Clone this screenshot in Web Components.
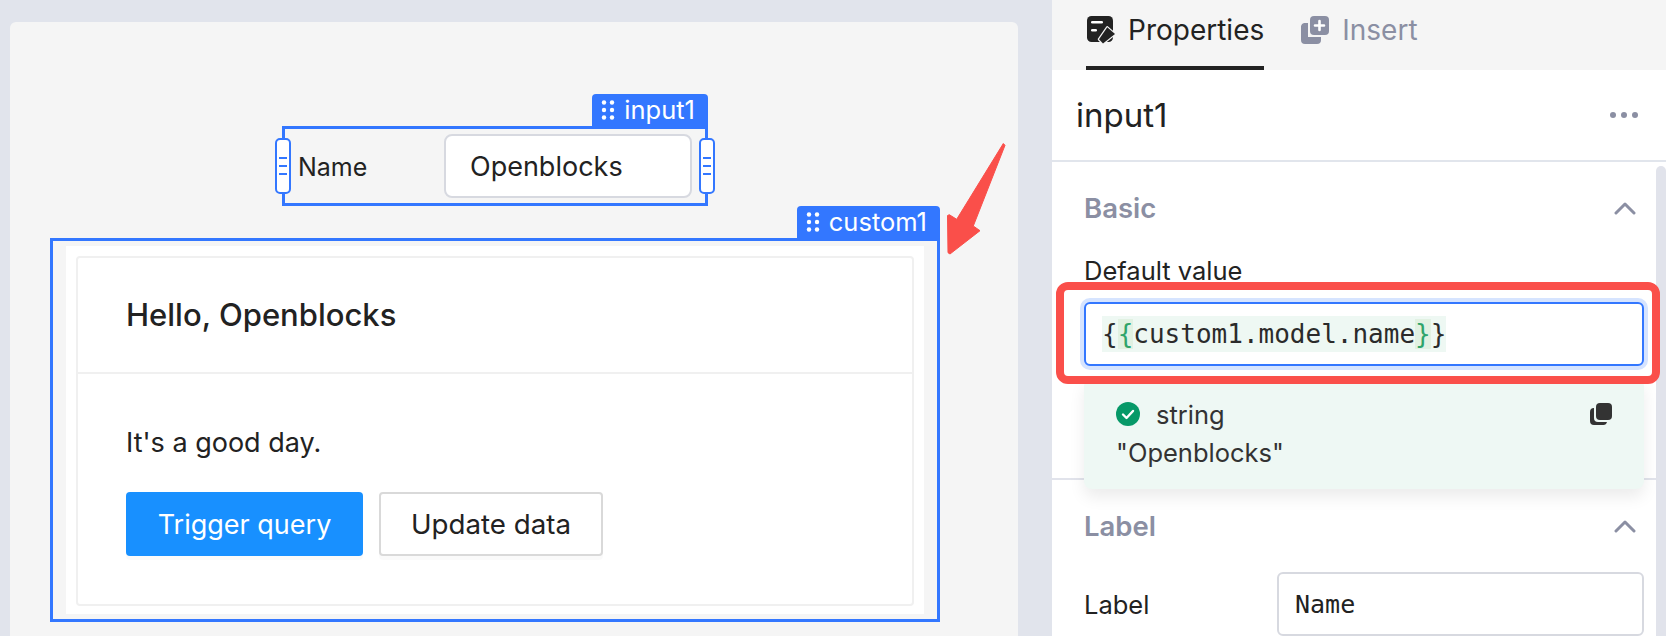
<!doctype html>
<html>
<head>
<meta charset="utf-8">
<title>input1</title>
<style>
  html, body { margin: 0; height: 100%; }
  body { background: #e1e4ec; font-family: Inter, "Liberation Sans", sans-serif; color: #222; overflow: hidden; }
</style>
</head>
<body>
<editor-shell>
  <editor-canvas slot="canvas">
    <selected-widget name="input1" resizable style="left:272px;top:104px;width:426px;height:80px">
      <input-widget label="Name" value="Openblocks"></input-widget>
    </selected-widget>
    <selected-widget name="custom1" style="left:40px;top:216px;width:890px;height:384px">
      <custom-card title="Hello, Openblocks" text="It's a good day."></custom-card>
    </selected-widget>
    <red-arrow></red-arrow>
  </editor-canvas>
  <property-panel slot="panel"></property-panel>
</editor-shell>

<script>
const BLUE = "#3377ff";

class EditorShell extends HTMLElement {
  constructor() {
    super();
    this.attachShadow({ mode: "open" });
    this.shadowRoot.innerHTML = `
      <style>
        :host { display: grid; grid-template-columns: 1008px 614px; column-gap: 34px; padding-left: 10px; height: 636px; box-sizing: border-box; }
        .left { padding-top: 22px; min-width: 0; }
      </style>
      <div class="left"><slot name="canvas"></slot></div>
      <slot name="panel"></slot>
    `;
  }
}

class EditorCanvas extends HTMLElement {
  constructor() {
    super();
    this.attachShadow({ mode: "open" });
    this.shadowRoot.innerHTML = `
      <style>
        :host { display: block; position: relative; height: 614px; background: #f5f5f5; border-radius: 6px 6px 0 0; }
      </style>
      <slot></slot>
    `;
  }
}

// selection frame around a widget on the canvas, with the name tab on top
class SelectedWidget extends HTMLElement {
  constructor() {
    super();
    this.attachShadow({ mode: "open" });
    this.shadowRoot.innerHTML = `
      <style>
        :host { display: block; position: absolute; box-sizing: border-box; border: 3px solid ${BLUE}; }
        .tab {
          position: absolute; right: -3px; bottom: calc(100% + 3px); height: 32px; box-sizing: border-box;
          display: flex; align-items: center; gap: 9px; padding: 0 13px 0 9px;
          background: ${BLUE}; color: #fff; border-radius: 4px 4px 0 0;
          font-size: 25.5px; line-height: 32px; white-space: nowrap;
        }
        .tab svg { display: block; flex: none; }
        .handle {
          position: absolute; top: 9px; width: 16px; height: 56px; box-sizing: border-box;
          border: 2px solid ${BLUE}; border-radius: 5px; background: #fff;
          display: none; flex-direction: column; align-items: center; justify-content: center; gap: 6px;
        }
        .handle i { display: block; width: 8px; height: 2px; background: ${BLUE}; }
        .handle.l { left: -10px; }
        .handle.r { right: -10px; }
        :host([resizable]) .handle { display: flex; }
      </style>
      <div class="tab">
        <svg width="14" height="20" viewBox="0 0 14 20" fill="#fff">
          <circle cx="3" cy="2.5" r="2.2"/><circle cx="11" cy="2.5" r="2.2"/>
          <circle cx="3" cy="10" r="2.2"/><circle cx="11" cy="10" r="2.2"/>
          <circle cx="3" cy="17.5" r="2.2"/><circle cx="11" cy="17.5" r="2.2"/>
        </svg>
        <span class="name"></span>
      </div>
      <div class="handle l"><i></i><i></i><i></i></div>
      <div class="handle r"><i></i><i></i><i></i></div>
      <slot></slot>
    `;
  }
  connectedCallback() {
    this.shadowRoot.querySelector(".name").textContent = this.getAttribute("name");
  }
}

class InputWidget extends HTMLElement {
  constructor() {
    super();
    this.attachShadow({ mode: "open" });
    this.shadowRoot.innerHTML = `
      <style>
        :host { display: flex; align-items: center; height: 100%; padding: 0 13px 0 13px; color: #222; box-sizing: border-box; }
        .label { width: 146px; flex: none; font-size: 25px; padding-top: 2px; }
        .box {
          flex: 1; height: 64px; box-sizing: border-box; border: 2px solid #d7d9e0; border-radius: 8px; font-size: 27px;
          background: #fff; padding-left: 24px; display: flex; align-items: center;
        }
      </style>
      <div class="label"></div>
      <div class="box"></div>
    `;
  }
  connectedCallback() {
    this.shadowRoot.querySelector(".label").textContent = this.getAttribute("label");
    this.shadowRoot.querySelector(".box").textContent = this.getAttribute("value");
  }
}

class CustomCard extends HTMLElement {
  constructor() {
    super();
    this.attachShadow({ mode: "open" });
    this.shadowRoot.innerHTML = `
      <style>
        :host { display: block; height: 100%; box-sizing: border-box; padding: 5px 13px 5px 13px; color: #222; font-size: 27px; }
        .outer { height: 100%; box-sizing: border-box; background: #fff; padding: 10px 10px 8px; }
        .card { height: 100%; box-sizing: border-box; border: 2px solid #f0f0f0; border-radius: 4px; display: flex; flex-direction: column; }
        .head { height: 116px; flex: none; box-sizing: border-box; border-bottom: 2px solid #f0f0f0; padding: 0 0 2px 48px; display: flex; align-items: center; font-size: 31px; font-weight: 500; }
        .body { padding: 46px 48px 0; }
        .text { line-height: 46px; }
        .btns { display: flex; gap: 16px; margin-top: 26px; }
        .btn {
          height: 64px; box-sizing: border-box; border-radius: 4px; display: flex; align-items: center; justify-content: center;
          box-shadow: 0 4px 0 rgba(0, 0, 0, .02); font-size: 27px;
        }
        .primary { width: 237px; background: #1890ff; color: #fff; }
        .plain { width: 224px; background: #fff; border: 2px solid #d9d9d9; font-size: 27.7px; }
      </style>
      <div class="outer">
        <div class="card">
          <div class="head"></div>
          <div class="body">
            <div class="text"></div>
            <div class="btns">
              <div class="btn primary">Trigger query</div>
              <div class="btn plain">Update data</div>
            </div>
          </div>
        </div>
      </div>
    `;
  }
  connectedCallback() {
    this.shadowRoot.querySelector(".head").textContent = this.getAttribute("title");
    this.shadowRoot.querySelector(".text").textContent = this.getAttribute("text");
  }
}

class RedArrow extends HTMLElement {
  constructor() {
    super();
    this.attachShadow({ mode: "open" });
    this.shadowRoot.innerHTML = `
      <style>
        :host { display: block; position: absolute; left: 928px; top: 118px; width: 70px; height: 120px; }
        svg { display: block; }
      </style>
      <svg width="70" height="120" viewBox="0 0 70 120">
        <path d="M65.3 3.5 L67 5.3 L35.3 86 L42 90.7 L12 114 L10 112.7 L9.5 75.5 L11.3 74.7 L18.7 79.3 Z" fill="#fa4f4a" stroke="#fa4f4a" stroke-width="1" stroke-linejoin="round"/>
      </svg>
    `;
  }
}

class PanelTab extends HTMLElement {
  constructor() {
    super();
    this.attachShadow({ mode: "open" });
    this.shadowRoot.innerHTML = `
      <style>
        :host { display: flex; align-items: center; gap: 13px; height: 70px; box-sizing: border-box; padding: 0 0 6px 1px; font-size: 28px; color: #8b8fa3; border-bottom: 4px solid transparent; }
        :host([active]) { color: #222; border-bottom-color: #222; }
        ::slotted(svg) { display: block; flex: none; }
      </style>
      <slot name="icon"></slot>
      <slot></slot>
    `;
  }
}

class PanelSection extends HTMLElement {
  constructor() {
    super();
    this.attachShadow({ mode: "open" });
    this.shadowRoot.innerHTML = `
      <style>
        :host { display: block; padding: 0 22px 0 32px; }
        .title { display: flex; align-items: center; justify-content: space-between; color: #8b8fa3; font-size: 27.5px; line-height: 31px; font-weight: 600; }
        svg { display: block; margin: -1px 8px 0 0; }
      </style>
      <div class="title">
        <span class="t"></span>
        <svg width="22" height="13" viewBox="0 0 22 13" fill="none" stroke="#8b8fa3" stroke-width="3" stroke-linecap="round" stroke-linejoin="round"><path d="M2 11 L11 2 L20 11"/></svg>
      </div>
      <slot></slot>
    `;
  }
  connectedCallback() {
    this.shadowRoot.querySelector(".t").textContent = this.getAttribute("title");
  }
}

class CodeField extends HTMLElement {
  constructor() {
    super();
    this.attachShadow({ mode: "open" });
    this.shadowRoot.innerHTML = `
      <style>
        :host { display: block; position: relative; }
        .label { font-size: 25.5px; color: #222; line-height: 30px; }
        .input {
          position: relative; height: 64px; margin-top: 16px; box-sizing: border-box; padding-left: 16px; display: flex; align-items: center;
          background: #fff; border: 2px solid ${BLUE}; border-radius: 6px; box-shadow: 0 0 0 4px #d6e4ff;
        }
        .code {
          display: inline-block; height: 36px; background: #eef8f3; color: #2b2b2b;
          font: 26px/36px "DejaVu Sans Mono", "Liberation Mono", monospace; white-space: pre;
        }
        .code b { font-weight: 400; color: #2fa46a; background: #e1f1e2; }
        .eval {
          height: 111px; margin-top: 12px; box-sizing: border-box; padding: 23px 32px 0 32px; background: #eef8f4; border-radius: 8px;
          box-shadow: 0 8px 16px rgba(0, 0, 0, .08); font-size: 25.5px; color: #333;
        }
        .row { display: flex; align-items: center; height: 26px; }
        .row span { flex: 1; margin-left: 16px; }
        .val { margin-top: 13px; line-height: 26px; }
        .box {
          position: absolute; left: -28px; right: -16px; top: 26px; height: 102px; box-sizing: border-box;
          border: 8px solid #fa4f4a; border-radius: 12px; pointer-events: none;
        }
        svg { display: block; flex: none; }
      </style>
      <div class="label">Default value</div>
      <div class="input"><span class="code">{<b>{</b>custom1.model.name<b>}</b>}</span></div>
      <div class="eval">
        <div class="row">
          <svg width="24" height="24" viewBox="0 0 24 24"><circle cx="12" cy="12" r="12" fill="#079968"/><path d="M7 12.5 L10.5 16 L17 9" fill="none" stroke="#fff" stroke-width="2.4" stroke-linecap="round" stroke-linejoin="round"/></svg>
          <span>string</span>
          <svg width="22" height="22" viewBox="0 0 22 22" fill="#333"><rect x="6" y="0" width="16" height="17" rx="4"/><path d="M4 5 A4 4 0 0 0 0 9 V18 A4 4 0 0 0 4 22 H13 A4 4 0 0 0 17 19 H8 A4 4 0 0 1 4 15 Z"/></svg>
        </div>
        <div class="val">"Openblocks"</div>
      </div>
      <div class="box"></div>
    `;
  }
}

class PropertyPanel extends HTMLElement {
  constructor() {
    super();
    this.attachShadow({ mode: "open" });
    this.shadowRoot.innerHTML = `
      <style>
        :host { display: block; position: relative; background: #fff; height: 636px; overflow: hidden; }
        .tabs { height: 70px; background: #f5f5f5; display: flex; gap: 36px; padding-left: 34px; }
        .head { height: 90px; display: flex; align-items: center; justify-content: space-between; padding: 0 28px 0 24px; font-size: 33px; color: #222; border-bottom: 2px solid #e1e5ec; }
        .dots { display: flex; gap: 5px; }
        .dots i { display: block; width: 6px; height: 6px; border-radius: 50%; background: #8b8fa3; }
        .main { position: relative; z-index: 1; padding-top: 31px; }
        .field { margin-top: 32px; }
        .rule { height: 2px; background: #e1e3eb; margin-top: -11px; }
        .label-sec { padding-top: 31px; }
        .row { display: flex; align-items: center; margin-top: 30px; font-size: 25.5px; }
        .row .name { width: 193px; flex: none; }
        .row .box {
          flex: 1; height: 64px; box-sizing: border-box; border: 2px solid #d7d9e0; border-radius: 6px; padding-left: 16px;
          display: flex; align-items: center; font: 25px "DejaVu Sans Mono", "Liberation Mono", monospace;
        }
        .scroll { position: absolute; top: 166px; right: 0; bottom: 0; width: 10px; background: #e1e3eb; border-radius: 5px 5px 0 0; }
      </style>
      <div class="tabs">
        <panel-tab active>
          <svg slot="icon" width="28" height="28" viewBox="0 0 28 28">
            <rect x="0" y="0" width="26" height="26" rx="4.5" fill="#222"/>
            <rect x="4" y="5" width="12" height="2.6" rx="1.3" fill="#fff"/>
            <rect x="4" y="13" width="6" height="2.6" rx="1.3" fill="#fff"/>
            <path d="M20.3 11.3 L28 18 L16 27.5 L12 23.3 Z" fill="#222" stroke="#f5f5f5" stroke-width="2.4" stroke-linejoin="round" paint-order="stroke"/>
          </svg>
          Properties
        </panel-tab>
        <panel-tab>
          <svg slot="icon" width="28" height="28" viewBox="0 0 28 28">
            <path d="M3 7 H7 V21 H20 V24 A4 4 0 0 1 16 28 H4 A4 4 0 0 1 0 24 V10 A4 4 0 0 1 3 7 Z" fill="#8b8fa3"/>
            <rect x="9" y="0" width="19" height="19" rx="4" fill="#8b8fa3"/>
            <path d="M18.5 5 V14 M14 9.5 H23" stroke="#fff" stroke-width="2.6" stroke-linecap="round"/>
          </svg>
          Insert
        </panel-tab>
      </div>
      <div class="head">
        <span>input1</span>
        <span class="dots"><i></i><i></i><i></i></span>
      </div>
      <div class="main">
        <panel-section title="Basic">
          <code-field class="field"></code-field>
        </panel-section>
        <div class="rule"></div>
        <panel-section class="label-sec" title="Label">
          <div class="row"><span class="name">Label</span><span class="box">Name</span></div>
        </panel-section>
      </div>
      <div class="scroll"></div>
    `;
  }
}

customElements.define("editor-shell", EditorShell);
customElements.define("editor-canvas", EditorCanvas);
customElements.define("selected-widget", SelectedWidget);
customElements.define("input-widget", InputWidget);
customElements.define("custom-card", CustomCard);
customElements.define("red-arrow", RedArrow);
customElements.define("panel-tab", PanelTab);
customElements.define("panel-section", PanelSection);
customElements.define("code-field", CodeField);
customElements.define("property-panel", PropertyPanel);
</script>
</body>
</html>
